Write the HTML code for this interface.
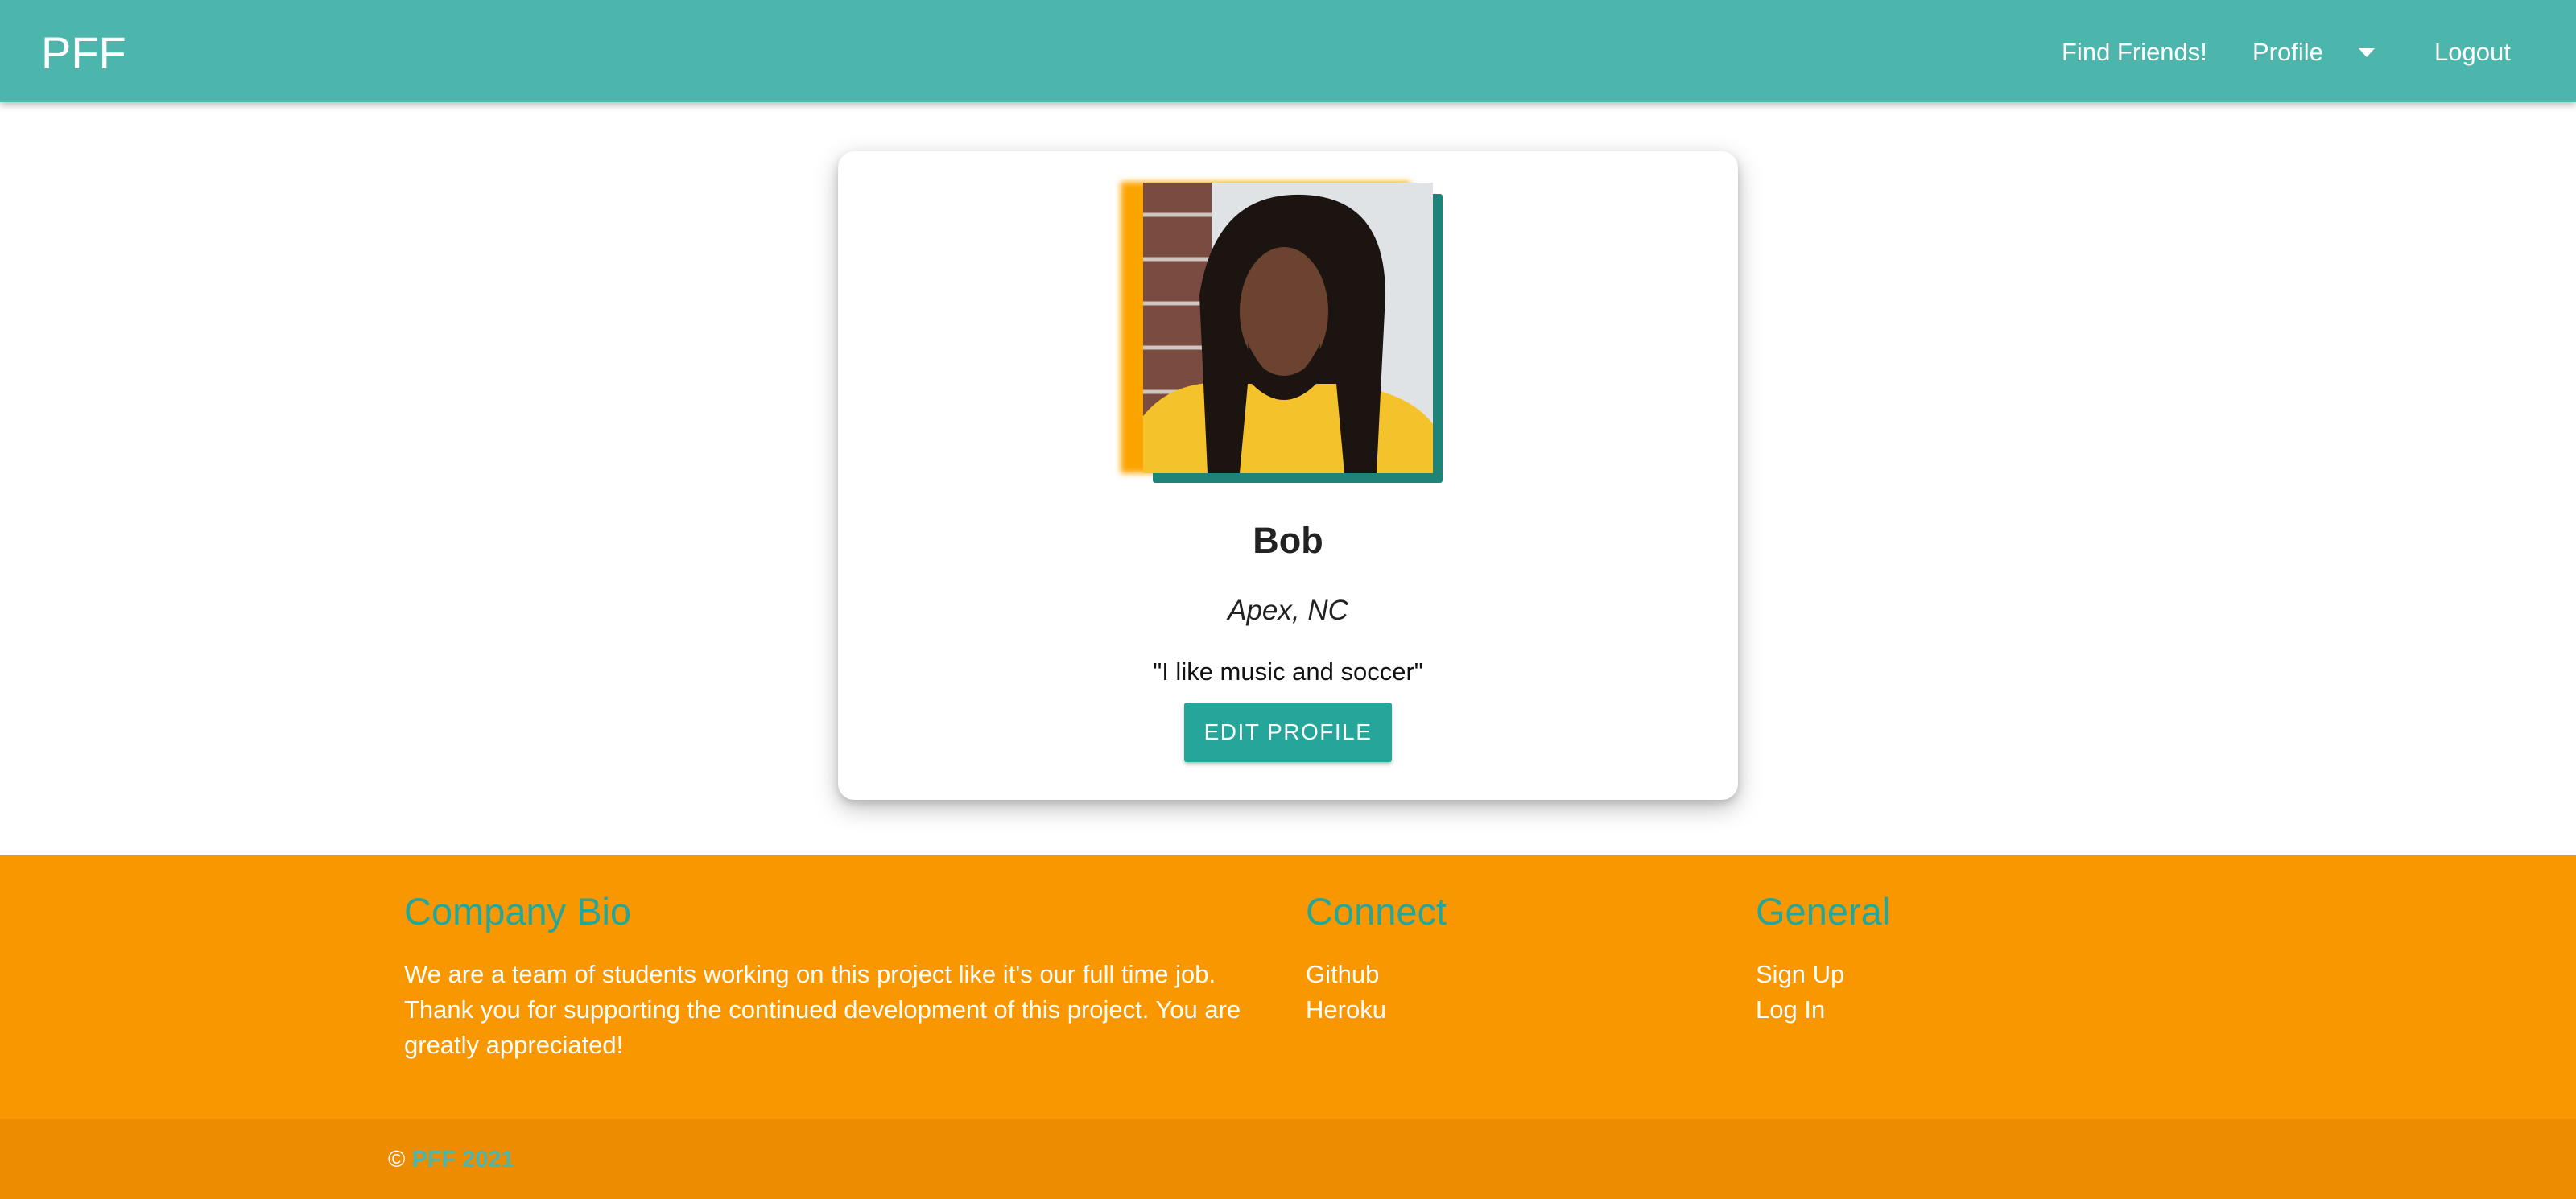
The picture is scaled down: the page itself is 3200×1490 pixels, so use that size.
<!DOCTYPE html>
<html><head><meta charset="utf-8"><style>
*{margin:0;padding:0;box-sizing:border-box}
body{width:3200px;height:1490px;overflow:hidden;background:#fff;font-family:"Liberation Sans",sans-serif;position:relative}
nav{position:absolute;left:0;top:0;width:3200px;height:127px;background:#4db6ac;box-shadow:0 4px 8px rgba(0,0,0,.25);z-index:2}
.logo{position:absolute;left:51px;top:33px;font-size:56px;color:#fff}
.ni{position:absolute;top:47px;font-size:31px;color:#fff}
.card{position:absolute;left:1041px;top:188px;width:1118px;height:806px;background:#fff;border-radius:20px;box-shadow:0 10px 30px rgba(0,0,0,.25),0 4px 10px rgba(0,0,0,.15)}
.c{position:absolute;width:3200px;left:0;text-align:center;color:#222}
.btn{position:absolute;left:1471px;top:873px;width:258px;height:74px;background:#26a69a;color:#fff;font-size:28px;letter-spacing:1.5px;text-align:center;line-height:74px;box-shadow:0 3px 5px rgba(0,0,0,.25);border-radius:3px}
footer{position:absolute;left:0;top:1063px;width:3200px;height:327px;background:#f99700}
.bot{position:absolute;left:0;top:1390px;width:3200px;height:100px;background:#ee8c00}
h3{position:absolute;font-size:47px;color:#26a69a;font-weight:normal;top:1105px}
.ft{position:absolute;font-size:31px;color:#fff;line-height:44px;top:1189px}
</style></head><body>
<nav>
<div class="logo">PFF</div>
<div class="ni" style="left:2561px">Find Friends!</div>
<div class="ni" style="left:2798px">Profile</div>
<div style="position:absolute;left:2930px;top:60px;border-left:10px solid transparent;border-right:10px solid transparent;border-top:11px solid #fff"></div>
<div class="ni" style="left:3024px">Logout</div>
</nav>
<div class="card"></div>
<div style="position:absolute;left:1392px;top:226px;width:360px;height:362px;background:#fba400;filter:blur(4px)"></div>
<div style="position:absolute;left:1432px;top:241px;width:360px;height:359px;background:#1e847a;border-radius:3px"></div>
<svg style="position:absolute;left:1420px;top:227px" width="360" height="361" viewBox="0 0 360 361">
<rect width="360" height="361" fill="#dfe3e5"/>
<rect width="85" height="361" fill="#7a4b40"/>
<g stroke="#cfc6c0" stroke-width="5"><line x1="0" y1="40" x2="85" y2="40"/><line x1="0" y1="95" x2="85" y2="95"/><line x1="0" y1="150" x2="85" y2="150"/><line x1="0" y1="205" x2="85" y2="205"/><line x1="0" y1="260" x2="85" y2="260"/></g>
<path d="M0 290 Q40 240 120 250 L250 250 Q330 260 360 300 L360 361 L0 361Z" fill="#f4c22b"/>
<path d="M80 361 L70 140 Q90 10 200 15 Q310 20 300 160 L290 361 L250 361 L240 250 L130 250 L120 361Z" fill="#1c1410"/>
<ellipse cx="175" cy="160" rx="55" ry="80" fill="#6b4330"/>
<path d="M130 200 Q175 290 220 200 L215 250 Q175 290 135 250Z" fill="#1c1410"/>
</svg>
<div class="c" style="top:646px;font-size:45px;font-weight:bold">Bob</div>
<div class="c" style="top:739px;font-size:35px;font-style:italic">Apex, NC</div>
<div class="c" style="top:817px;font-size:31px;color:#111">"I like music and soccer"</div>
<div class="btn">EDIT PROFILE</div>
<footer></footer>
<div class="bot"></div>
<h3 style="left:502px">Company Bio</h3>
<h3 style="left:1622px">Connect</h3>
<h3 style="left:2181px">General</h3>
<div class="ft" style="left:502px">We are a team of students working on this project like it's our full time job.<br>Thank you for supporting the continued development of this project. You are<br>greatly appreciated!</div>
<div class="ft" style="left:1622px">Github<br>Heroku</div>
<div class="ft" style="left:2181px">Sign Up<br>Log In</div>
<div style="position:absolute;left:482px;top:1425px;font-size:29px;color:#fff">© <span style="color:#4db6ac;font-weight:bold">PFF 2021</span></div>
</body></html>
